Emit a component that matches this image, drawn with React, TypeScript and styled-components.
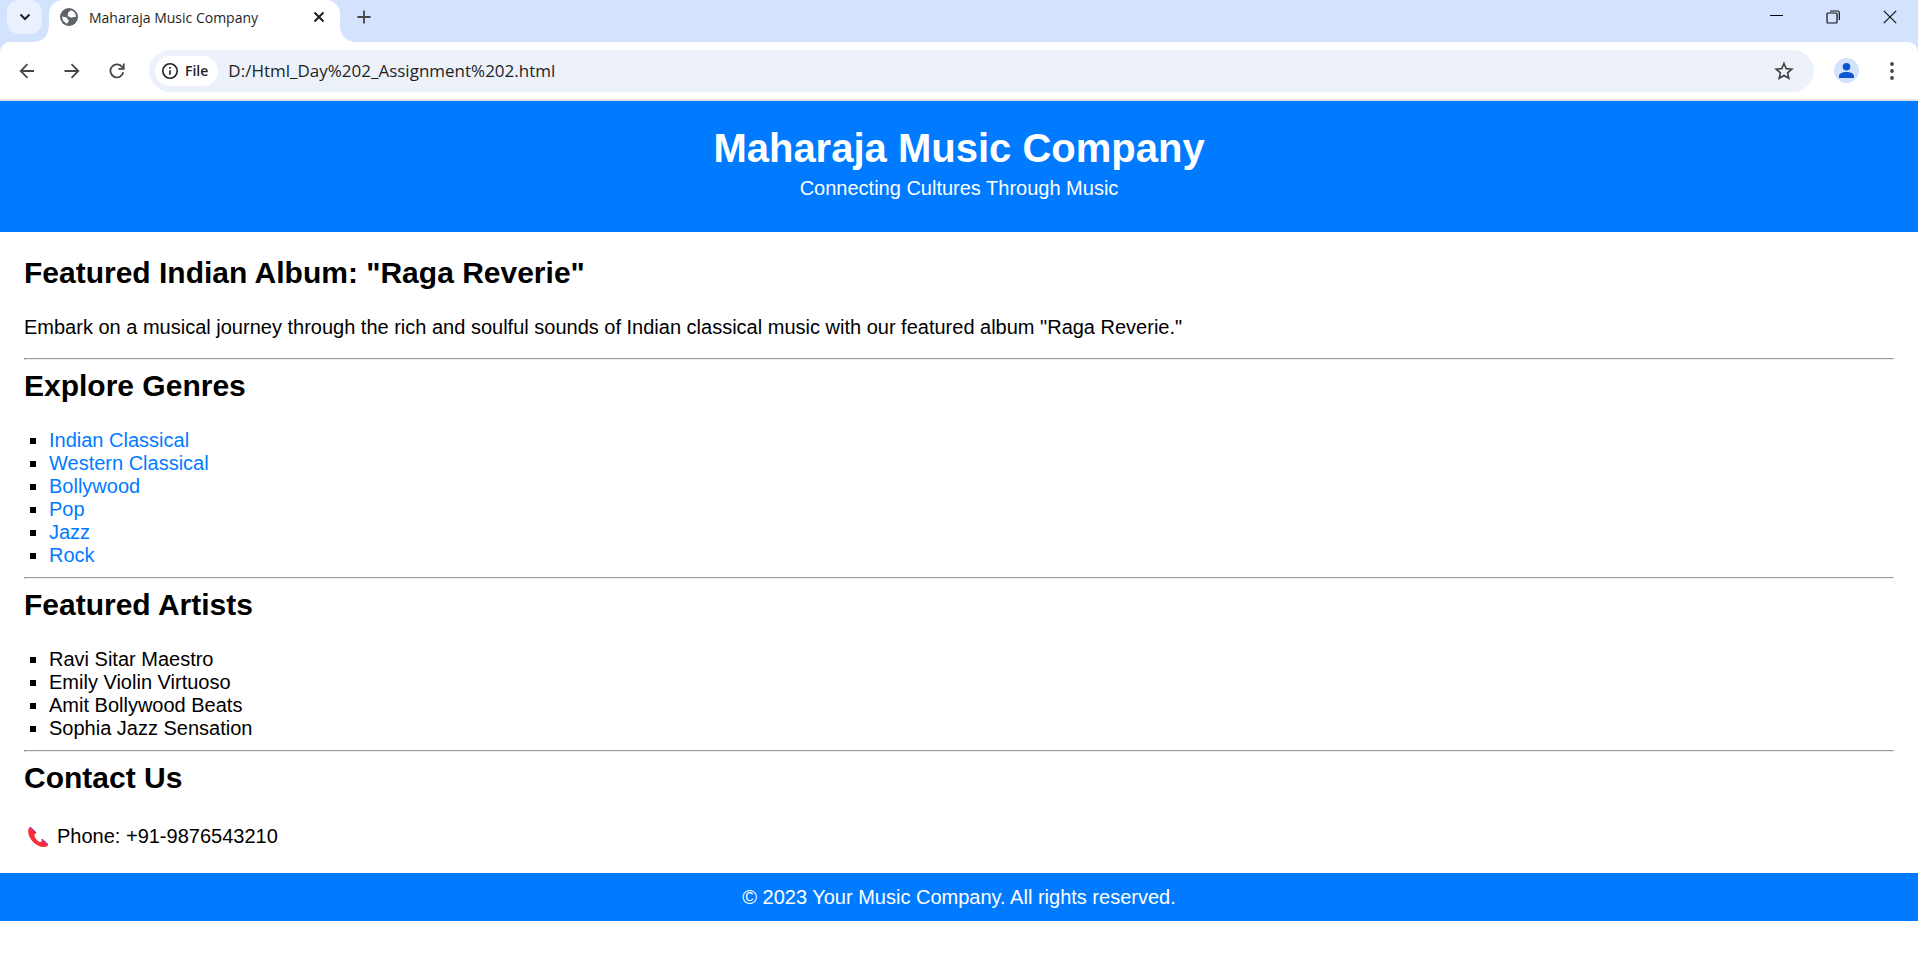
import React from 'react';
import styled, { createGlobalStyle } from 'styled-components';

const GlobalStyle = createGlobalStyle`
  * { box-sizing: border-box; }
  body {
    margin: 0;
    background: #fff;
    color: #000;
    font: 20px/23px "Liberation Sans", Arial, sans-serif;
  }
`;

const uiFont = '"Open Sans", "Noto Sans", sans-serif';

const TabStrip = styled.div`
  display: flex;
  height: 42px;
  padding-left: 7px;
  background: #d3e2fd;
`;

const IconButton = styled.button<{ $w: number; $h: number; $bg?: string; $radius?: number }>`
  display: flex;
  flex: none;
  align-items: center;
  justify-content: center;
  width: ${(p) => p.$w}px;
  height: ${(p) => p.$h}px;
  padding: 0;
  border: 0;
  border-radius: ${(p) => p.$radius ?? 0}px;
  background: ${(p) => p.$bg ?? 'transparent'};
  color: #474747;
`;

const Tab = styled.div`
  position: relative;
  display: flex;
  align-items: center;
  width: 291px;
  margin: 0 10px 0 7px;
  padding: 0 8px 8px 11px;
  border-radius: 14px 14px 0 0;
  background: #fff;

  &::before,
  &::after {
    content: "";
    position: absolute;
    bottom: 0;
    width: 14px;
    height: 14px;
  }
  &::before {
    right: 100%;
    background: radial-gradient(circle at 0 0, transparent 13px, #fff 14px);
  }
  &::after {
    left: 100%;
    background: radial-gradient(circle at 100% 0, transparent 13px, #fff 14px);
  }
`;

const TabTitle = styled.span`
  flex: 1;
  margin-left: 11px;
  padding-top: 1px;
  color: #1f1f1f;
  font: 14px/20px ${uiFont};
  white-space: nowrap;
`;

const WindowControls = styled.div`
  display: flex;
  margin-left: auto;
`;

const ToolbarBack = styled.div`
  background: #d3e2fd;
`;

const Toolbar = styled.div`
  display: flex;
  align-items: center;
  height: 59px;
  padding: 0 4px;
  border-bottom: 2px solid #e0e3e3;
  border-radius: 10px 10px 0 0;
  background: #fff;
`;

const AddressBar = styled.div`
  display: flex;
  flex: 1;
  align-items: center;
  height: 42px;
  margin: 0 10px;
  padding: 0 10px 0 6px;
  border-radius: 21px;
  background: #ecf1fa;
`;

const FileChip = styled.button`
  display: flex;
  align-items: center;
  gap: 7px;
  height: 30px;
  padding: 0 10px 0 7px;
  border: 0;
  border-radius: 15px;
  background: #fff;
  color: #1f1f1f;
  font: 600 14px/20px ${uiFont};
`;

const AddressInput = styled.input`
  flex: 1;
  min-width: 0;
  height: 30px;
  margin-left: 10px;
  padding: 0;
  border: 0;
  background: transparent;
  color: #1f1f1f;
  font: 17px/30px ${uiFont};
`;

const Banner = styled.header`
  padding: 24px 0 32px;
  background: #007bff;
  color: #fff;
  text-align: center;
`;

const SiteTitle = styled.h1`
  margin: 0 0 6px;
  font-size: 40px;
  line-height: 46px;
`;

const Tagline = styled.p`
  margin: 0;
`;

const Content = styled.main`
  padding: 25px 24px;
`;

const SectionTitle = styled.h2`
  margin: 0 0 27px;
  font-size: 30px;
  line-height: 32px;
`;

const Intro = styled.p`
  margin: 0 0 19px;
`;

const Rule = styled.hr`
  height: 2px;
  margin: 10px 0;
  border: 1px solid;
  border-color: #9a9a9a #eee #eee #9a9a9a;
`;

const List = styled.ul`
  margin: 0;
  padding-left: 25px;
  list-style: square;
`;

const GenreLink = styled.a`
  color: #007bff;
  text-decoration: none;
`;

const Phone = styled.p`
  display: flex;
  align-items: center;
  gap: 9px;
  margin: 0;
  padding: 4px 4px 0;
`;

const Footer = styled.footer`
  padding: 12px;
  background: #007bff;
  color: #fff;
  line-height: 24px;
  text-align: center;
`;

const genres = ['Indian Classical', 'Western Classical', 'Bollywood', 'Pop', 'Jazz', 'Rock'];
const artists = ['Ravi Sitar Maestro', 'Emily Violin Virtuoso', 'Amit Bollywood Beats', 'Sophia Jazz Sensation'];

const line = { fill: 'none', stroke: 'currentColor', strokeWidth: 1.8 };

const Globe = () => (
  <svg width="18" height="18" viewBox="0 0 18 18" aria-hidden="true">
    <circle cx="9" cy="9" r="9" fill="#5f6368" />
    <path d="M10.500 2.300C10 3.600 9 3.800 8.200 4.500c-.8.800.5 1.500-.3 2.300-.7.700-.2 1.700.8 1.600 1.200-.2 1.500.9 2.300 1.200 1.200.4 1.700-.8 2.900-.7 1 .1 1.800.4 2.100-.1A6.900 6.900 0 0 0 10.500 2.300zM2.200 8.200c1.200 1.100 3.200.7 4.500 1.500 1.100.7.500 1.900 1.600 2.300 1 .4.600 1.500-.2 1.900-.8.500-.6 1.200-.4 1.900A6.900 6.900 0 0 1 2.200 8.200z" fill="#fff" />
  </svg>
);

const PhoneIcon = () => (
  <svg width="20" height="20" viewBox="0 0 20 20" aria-hidden="true">
    <path d="M1.200.5C-.5 2.600-.2 7.500 2.700 11.900 6.100 17 11.600 20.200 16.500 19.900c1.600-.1 2.900-.7 3.300-1.700l-5-5.200c-1 .4-1.500 2.300-3 1.900-2.500-.8-4.800-3.700-5.300-6.100-.3-1.500 1.200-1.700 1.500-2.700z" fill="#f92f3c" />
    <path d="M1.200.5C1.700-.2 2.700-.1 3.300.5l4.500 4.300c.6.600.6 1.300.2 1.700zM13 12.500c.6-.7 1.400-.7 2-.1l4.500 4.200c.7.700.8 1.400.3 2z" fill="#b4238c" />
  </svg>
);

export default function App() {
  return (
    <>
      <GlobalStyle />
      <TabStrip>
        <IconButton $w={35} $h={34} $bg="#e9f1fe" $radius={12} aria-label="Search tabs">
          <svg width="12" height="8" viewBox="0 0 12 8" {...line} strokeWidth={2} color="#1f1f1f"><path d="M1.500 1.500 6 6l4.500-4.500" /></svg>
        </IconButton>
        <Tab>
          <Globe />
          <TabTitle>Maharaja Music Company</TabTitle>
          <IconButton $w={26} $h={26} aria-label="Close tab">
            <svg width="12" height="12" viewBox="0 0 12 12" {...line} strokeWidth={2} color="#1f1f1f"><path d="m1.500 1.500 9 9m0-9-9 9" /></svg>
          </IconButton>
        </Tab>
        <IconButton $w={28} $h={34} aria-label="New tab">
          <svg width="14" height="14" viewBox="0 0 14 14" {...line}><path d="M7 .5v13M.5 7h13" /></svg>
        </IconButton>
        <WindowControls>
          <IconButton $w={57} $h={34} aria-label="Minimize">
            <svg width="14" height="14" viewBox="0 0 14 14"><path d="M1 5h13v1H1z" fill="#000" /></svg>
          </IconButton>
          <IconButton $w={57} $h={34} aria-label="Restore">
            <svg width="14" height="14" viewBox="0 0 14 14" fill="none" stroke="#111" strokeWidth="1.200"><rect x="1" y="3" width="10" height="10" rx="1" /><path d="M4 1h7.500C12.600 1 13.300 1.700 13.300 2.800V10" /></svg>
          </IconButton>
          <IconButton $w={57} $h={34} aria-label="Close window">
            <svg width="14" height="14" viewBox="0 0 14 14" fill="none" stroke="#111" strokeWidth="1.200"><path d="m.8.8 12.400 12.400m0-12.400L.8 13.200" /></svg>
          </IconButton>
        </WindowControls>
      </TabStrip>
      <ToolbarBack>
        <Toolbar>
          <IconButton $w={45} $h={42} aria-label="Back">
            <svg width="16" height="16" viewBox="0 0 16 16" {...line}><path d="M15 8H2M8.500 1.200 1.700 8l6.800 6.800" /></svg>
          </IconButton>
          <IconButton $w={45} $h={42} aria-label="Forward">
            <svg width="16" height="16" viewBox="0 0 16 16" {...line}><path d="M.5 8H14M7.500 1.200 14.300 8l-6.800 6.800" /></svg>
          </IconButton>
          <IconButton $w={45} $h={42} aria-label="Reload">
            <svg width="16" height="16" viewBox="0 0 16 16" {...line}><path d="M14.300 9.300A6.500 6.500 0 1 1 12.800 3.600L14.500 5.500M14.700.5v5.300H9.400" /></svg>
          </IconButton>
          <AddressBar>
            <FileChip>
              <svg width="16" height="16" viewBox="0 0 16 16" fill="none" stroke="#1f1f1f" strokeWidth="1.600"><circle cx="8" cy="8" r="7.200" /><path d="M8 7.200v4.600M8 4v1.800" /></svg>
              File
            </FileChip>
            <AddressInput aria-label="Address" defaultValue="D:/Html_Day%202_Assignment%202.html" />
            <IconButton $w={40} $h={30} aria-label="Bookmark this page">
              <svg width="20" height="20" viewBox="0 0 20 20" fill="none" stroke="#474747" strokeWidth="1.700"><path d="m10 2.500 2.200 5.100 5.600.5-4.200 3.700 1.200 5.500-4.800-2.900-4.800 2.900 1.200-5.500-4.200-3.700 5.600-.5z" /></svg>
            </IconButton>
          </AddressBar>
          <IconButton $w={45} $h={42} aria-label="Profile">
            <svg width="25" height="25" viewBox="0 0 25 25"><circle cx="12.500" cy="12.500" r="12.500" fill="#d3e3fd" /><circle cx="12.500" cy="8.700" r="3.800" fill="#0b57d0" /><path d="M5 20v-2.200c0-2.500 4.200-3.800 7.500-3.800s7.500 1.300 7.500 3.800V20z" fill="#0b57d0" /></svg>
          </IconButton>
          <IconButton $w={45} $h={42} aria-label="Menu">
            <svg width="4" height="18" viewBox="0 0 4 18" fill="#474747"><circle cx="2" cy="2" r="1.900" /><circle cx="2" cy="9" r="1.900" /><circle cx="2" cy="16" r="1.900" /></svg>
          </IconButton>
        </Toolbar>
      </ToolbarBack>
      <Banner>
        <SiteTitle>Maharaja Music Company</SiteTitle>
        <Tagline>Connecting Cultures Through Music</Tagline>
      </Banner>
      <Content>
        <SectionTitle>Featured Indian Album: "Raga Reverie"</SectionTitle>
        <Intro>
          Embark on a musical journey through the rich and soulful sounds of Indian classical music with our featured album "Raga Reverie."
        </Intro>
        <Rule />
        <SectionTitle>Explore Genres</SectionTitle>
        <List>
          {genres.map((g) => (
            <li key={g}><GenreLink href="#">{g}</GenreLink></li>
          ))}
        </List>
        <Rule />
        <SectionTitle>Featured Artists</SectionTitle>
        <List>
          {artists.map((a) => (
            <li key={a}>{a}</li>
          ))}
        </List>
        <Rule />
        <SectionTitle>Contact Us</SectionTitle>
        <Phone><PhoneIcon />Phone: +91-9876543210</Phone>
      </Content>
      <Footer>© 2023 Your Music Company. All rights reserved.</Footer>
    </>
  );
}
